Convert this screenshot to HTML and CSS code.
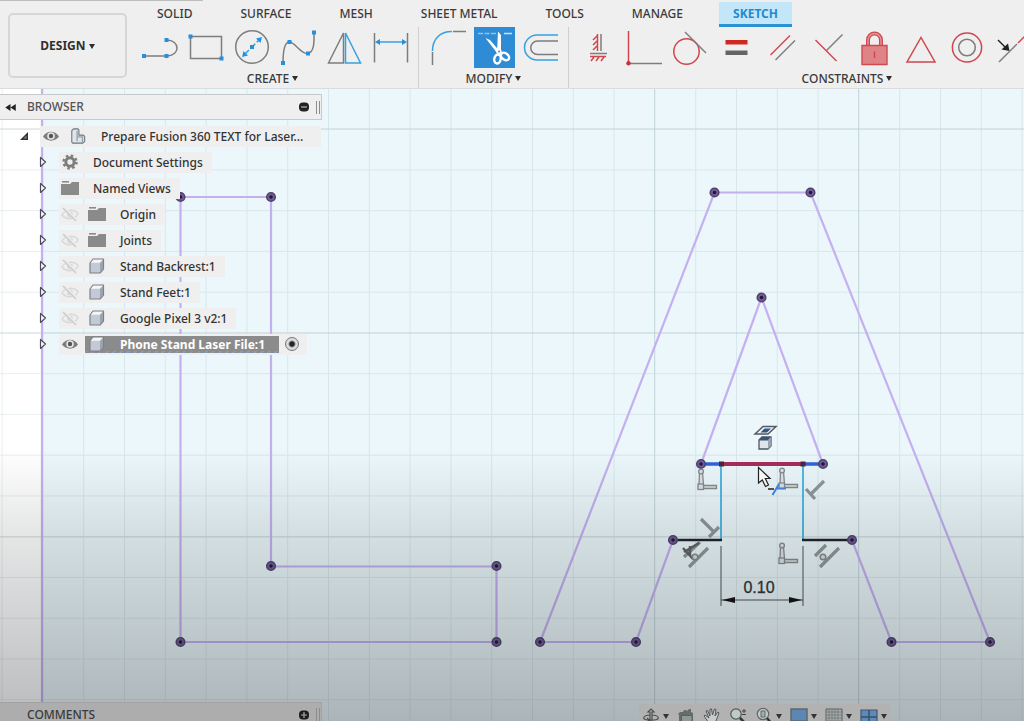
FILE: index.html
```html
<!DOCTYPE html>
<html lang="en">
<head>
<meta charset="utf-8">
<title>Sketch workspace</title>
<link rel="stylesheet" href="styles.css">
</head>
<body>
<svg class="defs" aria-hidden="true">
  <symbol id="eye" viewBox="0 0 18 14"><path d="M1 7.500C4.500 1 13.500 1 17 7.500C13.500 13 4.500 13 1 7.500Z" fill="#7c7c7c"/><circle cx="9" cy="7" r="3.800" fill="#e6e6e6"/><circle cx="9" cy="7" r="2.200" fill="#555"/></symbol>
  <symbol id="eye-off" viewBox="0 0 18 14"><path d="M1 8C4 2 14 2 17 7C14 13 5 13 1 8Z" fill="none" stroke="#d8d8d8" stroke-width="1.500"/><circle cx="9" cy="7.500" r="3" fill="#d8d8d8"/><path d="M3 1L15 13" stroke="#ededed" stroke-width="3"/><path d="M2 1L15 14" stroke="#cccccc" stroke-width="1.500"/></symbol>
  <symbol id="folder" viewBox="0 0 18 14"><path d="M0 3H9L11 1H18V14H0Z" fill="#8a8a8a"/><path d="M1 .8H8" stroke="#8a8a8a" stroke-width="1.600"/></symbol>
  <symbol id="cube" viewBox="0 0 18 16"><path d="M2 5L5 1H15.500V11L12 15H2Z" fill="#c3cad4" stroke="#7c8088" stroke-width="1.200" stroke-linejoin="round"/><path d="M2.800 4.800L5.300 1.800H14.700L12 4.800Z" fill="#f3f5f8"/><path d="M12 5V14.500L15 11V2Z" fill="#9aa3b0"/></symbol>
  <symbol id="open" viewBox="0 0 8 12"><path d="M1.500 1.500V10.500L6.500 6Z" fill="#f4f8fb" stroke="#4f4b59" stroke-width="1.200" stroke-linejoin="round"/></symbol>
  <symbol id="hv" viewBox="0 0 22 24"><g stroke="#858a8c" fill="#dde3e5" stroke-width="1.300"><path d="M3.500 4.500H6.500L7.500 17H3Z"/><path d="M7 17.500H20.500V20.500H7Z"/><rect x="2" y="16" width="5.500" height="5.500"/><circle cx="5" cy="3.500" r="2.400"/></g></symbol>
</svg>

<header class="toolbar">
  <button class="workspace" type="button">DESIGN <span class="caret"></span></button>
  <div class="ribbon">
    <nav class="tabs">
      <button class="tab" type="button">SOLID</button>
      <button class="tab" type="button">SURFACE</button>
      <button class="tab" type="button">MESH</button>
      <button class="tab" type="button">SHEET METAL</button>
      <button class="tab" type="button">TOOLS</button>
      <button class="tab" type="button">MANAGE</button>
      <button class="tab tab-active" type="button">SKETCH</button>
    </nav>
    <div class="panels">
      <section class="panel">
        <div class="tools">
          <button class="tool" type="button" aria-label="Line"><svg viewBox="0 0 46 41"><path class="g" d="M7 29H29.500c14 0 14-16 0-16"/><path class="bf" d="M5 27h4v4H5zM27.500 27h4v4h-4zM27.500 11h4v4h-4z"/></svg></button>
          <button class="tool" type="button" aria-label="Rectangle"><svg viewBox="0 0 46 41"><path class="g" d="M7.500 9.500h31v22h-31z"/><path class="bf" d="M5.500 7.500h4v4h-4zM36.500 29.500h4v4h-4z"/></svg></button>
          <button class="tool" type="button" aria-label="Circle"><svg viewBox="0 0 46 41"><circle class="g" cx="23" cy="20" r="16.300"/><path class="b" d="M15 28L31 12" stroke-dasharray="7 2"/><path class="bf" d="M21 18h4v4h-4zM33 10l-1.500 6-4.500-4.500zM13 30l1.500-6 4.500 4.500z"/></svg></button>
          <button class="tool" type="button" aria-label="Spline"><svg viewBox="0 0 46 41"><path class="g" d="M8 36C8 26 9 15 14.500 15S26 28 33 26.500S39 12 39 5"/><path class="bf" d="M6 34h4v4H6zM12.500 13h4v4h-4zM31 24.500h4v4h-4zM37 3.500h4v4h-4z"/></svg></button>
          <button class="tool" type="button" aria-label="Mirror"><svg viewBox="0 0 46 41"><path class="g" d="M7.500 36L22.500 6V36Z"/><path class="b" d="M24.500 6V36H39.500Z"/></svg></button>
          <button class="tool" type="button" aria-label="Dimension"><svg viewBox="0 0 46 41"><path class="g" d="M7.500 6V35.500M40.500 6V35.500"/><path class="b" d="M10 15H38"/><path class="bf" d="M8 15l5-3v6zM40 15l-5-3v6z"/></svg></button>
        </div>
        <button class="panel-name" type="button">CREATE<span class="caret"></span></button>
      </section>
      <section class="panel">
        <div class="tools">
          <button class="tool" type="button" aria-label="Fillet"><svg viewBox="0 0 46 41"><path class="g" d="M7.500 25V38M28 4.500H41"/><path class="b" d="M7.500 24C7.500 12 15 4.500 27 4.500"/></svg></button>
          <button class="tool" type="button" aria-label="Trim"><svg viewBox="0 0 46 41"><path fill="#2f8bd4" d="M3 0h41v41H3z"/><path d="M7 6.500H26" stroke="#8cc4ef" stroke-width="1.500" stroke-dasharray="5 1.500"/><path d="M33 6.500H41" stroke="#c8e3f8" stroke-width="1.500"/><path fill="#fff" d="M27 4.500L30 8V25H26ZM14.500 11L19 13L28.500 24L26 26Z"/><g fill="none" stroke="#fff" stroke-width="2.400"><ellipse cx="26.500" cy="32" rx="3.200" ry="4.500" transform="rotate(12 26.500 32)"/><ellipse cx="34" cy="29.500" rx="3.200" ry="4.500" transform="rotate(-52 34 29.500)"/></g><circle cx="28" cy="24.500" r="2.600" fill="#fff"/><circle cx="28" cy="24.500" r="1" fill="#2f8bd4"/></svg></button>
          <button class="tool" type="button" aria-label="Offset"><svg viewBox="0 0 46 41"><path class="b" d="M41 8H20a12.500 12.500 0 0 0 0 25H41"/><path class="g" d="M41 14H20.500a6.700 6.700 0 0 0 0 13.500H41"/></svg></button>
        </div>
        <button class="panel-name" type="button">MODIFY<span class="caret"></span></button>
      </section>
      <section class="panel panel-wide">
        <div class="tools">
          <button class="tool" type="button" aria-label="Horizontal/Vertical"><svg viewBox="0 0 46 41"><path class="g" d="M26 7V24M15 26.500H32"/><path class="r" d="M22.500 7V24M22 9l-4 4M22 14l-4 4M22 19l-4 4M15 29.500H31M19 30l-3 4M24 30l-3 4M29 30l-3 4"/></svg></button>
          <button class="tool" type="button" aria-label="Coincident"><svg viewBox="0 0 46 41"><path class="g" d="M9 36.500H41"/><path class="r" d="M7.500 4V36"/><circle cx="7.500" cy="36.300" r="2.200" fill="#cc2f36"/></svg></button>
          <button class="tool" type="button" aria-label="Tangent"><svg viewBox="0 0 46 41"><circle class="r" cx="19.500" cy="24.500" r="12.700"/><path class="g" d="M18 5L39 26"/></svg></button>
          <button class="tool" type="button" aria-label="Equal"><svg viewBox="0 0 46 41"><path fill="#d0281f" d="M12.500 13h22v4.500h-22z"/><path fill="#646464" d="M12.500 23.500h22V28h-22z"/></svg></button>
          <button class="tool" type="button" aria-label="Parallel"><svg viewBox="0 0 46 41"><path class="r" d="M11.500 28L31 8.500"/><path class="g" d="M16.500 33L36 13.500"/></svg></button>
          <button class="tool" type="button" aria-label="Perpendicular"><svg viewBox="0 0 46 41"><path class="g" d="M21.500 23.500L37.500 7.500"/><path class="r" d="M10.500 13L31.500 34"/></svg></button>
          <button class="tool" type="button" aria-label="Fix"><svg viewBox="0 0 46 41"><path d="M17 18V13a6.500 6.500 0 0 1 13 0V18" fill="none" stroke="#cf4a50" stroke-width="4"/><path d="M17 18V13a6.500 6.500 0 0 1 13 0V18" fill="none" stroke="#e49496" stroke-width="1.500"/><path d="M11 18.500h25v19H11z" fill="#df8486" stroke="#cf4a50" stroke-width="1.400"/><path class="r" d="M23.500 24.500V31"/></svg></button>
          <button class="tool" type="button" aria-label="Midpoint"><svg viewBox="0 0 46 41"><path class="r" d="M10 35H38L24 10.500Z"/></svg></button>
          <button class="tool" type="button" aria-label="Concentric"><svg viewBox="0 0 46 41"><circle class="r" cx="24" cy="20.500" r="14.600"/><circle class="g" cx="24" cy="20.500" r="8.300"/></svg></button>
          <button class="tool" type="button" aria-label="Collinear"><svg viewBox="0 0 46 41"><path class="g" d="M10 35L28 17"/><path class="r" d="M29 16L37 8"/><path d="M9 13L17 21" stroke="#222" stroke-width="1.500"/><path d="M20.500 24l-8-1.500 6.500-6z" fill="#222"/></svg></button>
        </div>
        <button class="panel-name" type="button">CONSTRAINTS<span class="caret"></span></button>
      </section>
    </div>
  </div>
</header>

<main class="stage">
  <svg class="drawing" role="img" aria-label="Sketch of the letters L and A">
    <defs>
      <pattern id="grid" patternUnits="userSpaceOnUse" x="1.600" y="39.600" width="40.800" height="40.760"><path d="M.5 0V40.800M0 .5H40.800" stroke="#78989c" stroke-opacity=".17" fill="none"/></pattern>
      <linearGradient id="shade" x1="0" y1="0" x2="0" y2="1"><stop offset=".57" stop-color="#10151a" stop-opacity="0"/><stop offset=".7" stop-color="#10151a" stop-opacity=".105"/><stop offset="1" stop-color="#10151a" stop-opacity=".29"/></linearGradient>
    </defs>
    <rect width="100%" height="100%" fill="#fff"/>
    <rect x="42" width="100%" height="100%" fill="#ebf7fa"/>
    <rect width="100%" height="100%" fill="url(#grid)"/>
    <path d="M654.500 0V2000M858.500 0V2000M0 40H4000M0 244H4000M0 448H4000" stroke="#78989c" stroke-opacity=".22"/>
    <g transform="translate(0 -89)">
      <g fill="none" stroke="#c4b0f1" stroke-width="2.200">
        <path d="M42 89V1200"/>
        <path d="M180.500 197H271V566.500H496.500V642H180.500Z"/>
        <path d="M673 540L636 642H540L714.500 192.500H810.500L990 642H891.500L852 540"/>
        <path d="M701 464L761.500 297.500L823 464"/>
      </g>
      <g fill="none">
        <path d="M701 464H721M803 464H823" stroke="#2e63da" stroke-width="3.500"/>
        <path d="M721 464V540M803 464V540" stroke="#52b9e2" stroke-width="2"/>
        <path d="M721 464H803" stroke="#a62c5a" stroke-width="4"/>
        <path d="M673 540H722M802 540H852" stroke="#20242a" stroke-width="2.500"/>
        <path d="M721 546V606M803 546V606M721 600H803" stroke="#4b5255"/>
      </g>
      <path d="M722 600l13-3v6zM802 600l-13-3v6z" fill="#111"/>
      <path d="M719 461.500h5v5h-5zM800.500 461.500h5v5h-5z" fill="#4c2440"/>
      <g fill="#6f5b96" stroke="#50446c" stroke-width="1.500">
        <circle cx="180.500" cy="197" r="4.300"/><circle cx="271" cy="197" r="4.300"/><circle cx="271" cy="566" r="4.300"/><circle cx="496.500" cy="566" r="4.300"/><circle cx="496.500" cy="642" r="4.300"/><circle cx="180.500" cy="642" r="4.300"/>
        <circle cx="714.500" cy="192.500" r="4.300"/><circle cx="810.500" cy="192.500" r="4.300"/><circle cx="761.500" cy="297.500" r="4.300"/><circle cx="701" cy="464" r="4.300"/><circle cx="823" cy="464" r="4.300"/><circle cx="673" cy="540" r="4.300"/><circle cx="852" cy="540" r="4.300"/><circle cx="540" cy="642" r="4.300"/><circle cx="636" cy="642" r="4.300"/><circle cx="891.500" cy="642" r="4.300"/><circle cx="990" cy="642" r="4.300"/>
      </g>
      <path stroke="#241536" stroke-width="3.500" stroke-linecap="round" d="M180.500 197h0M271 197h0M271 566h0M496.500 566h0M496.500 642h0M180.500 642h0M714.500 192.500h0M810.500 192.500h0M761.500 297.500h0M701 464h0M823 464h0M673 540h0M852 540h0M540 642h0M636 642h0M891.500 642h0M990 642h0"/>
      <use href="#hv" x="696" y="468" width="22" height="24"/>
      <use href="#hv" x="777" y="467" width="22" height="24"/>
      <use href="#hv" x="777" y="542" width="22" height="24"/>
      <g fill="none" stroke="#8f9698" stroke-width="3.200">
        <path d="M824 481L811 494M806 489L815 499"/>
        <path d="M701 519L714 532M719 527L709 537"/>
        <path d="M815 556L826 545M820 567L839 548M684 557L700 542M689 567L708 548"/>
      </g>
      <path d="M683 548L693 559M684 552L699 543M690 546V556" fill="none" stroke="#5d6364" stroke-width="2.500"/>
      <g fill="#d6dcde" stroke="#858a8c" stroke-width="1.500"><circle cx="823" cy="557" r="2.800"/><circle cx="695" cy="557" r="2.800"/></g>
      <path d="M755 434L763 426.500H776L768 434Z" fill="#eef2f4" stroke="#55595f" stroke-width="1.500"/><path d="M760.500 432.500L764.500 428.500H771L767 432.500Z" fill="#33558a"/>
      <path d="M759 440L762 437H771V446L768 449H759Z" fill="#dfe4e9" stroke="#50565e" stroke-width="1.300"/><path d="M759 440.500L762 437H771L768 440.500Z" fill="#31567f"/><path d="M768 440L771 437V446L768 449Z" fill="#99a2ae"/>
      <path d="M758.500 467.500V483L762.300 480L765.500 486.500L768.500 485L765.300 478.500H770Z" fill="#fff" stroke="#222" stroke-width="1.200"/>
      <path d="M768 489H774" stroke="#222" stroke-width="1.500"/><path d="M772.500 495L779 484M777 488.500H786" stroke="#4387e6" stroke-width="2"/>
      <text class="dim" x="759" y="593" text-anchor="middle">0.10</text>
    </g>
    <rect width="100%" height="100%" fill="url(#shade)"/>
  </svg>

  <aside class="browser">
    <div class="bar">
      <svg class="rewind" viewBox="0 0 12 8"><path d="M6 0V8L0 4ZM12 0V8L6 4Z" fill="#222"/></svg>
      <span class="bar-title">BROWSER</span>
      <button class="round" type="button" aria-label="Collapse all"><svg viewBox="0 0 10 10"><rect y=".5" width="10" height="9" rx="4" fill="#222"/><path d="M2 5H8" stroke="#bbb" stroke-width="1.200"/></svg></button>
      <span class="grip"></span>
    </div>
    <ul class="tree">
      <li class="row root"><svg class="toggle" viewBox="0 0 8 8"><path d="M0 8H8V0Z" fill="#333"/><path d="M3.500 6.500h3v-3z" fill="#888"/></svg>
        <span class="pill"><svg class="icon"><use href="#eye"/></svg><svg class="icon" viewBox="0 0 18 18"><path d="M2 3L4 1H9L10 2V8H15L16.500 9.500V15L14.500 17H3L2 16Z" fill="#dfe4ea" stroke="#6e747c" stroke-width="1.200" stroke-linejoin="round"/><path d="M8 3V15M8 10H14V16" fill="none" stroke="#98a1ac" stroke-width="1.500"/></svg><span class="label">Prepare Fusion 360 TEXT for Laser...</span></span></li>
      <li class="row"><svg class="toggle"><use href="#open"/></svg><span class="pill"><svg class="icon" viewBox="0 0 18 18"><circle cx="9" cy="9" r="4.700" fill="none" stroke="#7d7d7d" stroke-width="3.400"/><circle cx="9" cy="9" r="7.300" fill="none" stroke="#7d7d7d" stroke-width="2.600" stroke-dasharray="2.800 2.934"/></svg><span class="label">Document Settings</span></span></li>
      <li class="row"><svg class="toggle"><use href="#open"/></svg><span class="pill"><svg class="icon"><use href="#folder"/></svg><span class="label">Named Views</span></span></li>
      <li class="row"><svg class="toggle"><use href="#open"/></svg><span class="pill"><svg class="icon"><use href="#eye-off"/></svg><svg class="icon"><use href="#folder"/></svg><span class="label">Origin</span></span></li>
      <li class="row"><svg class="toggle"><use href="#open"/></svg><span class="pill"><svg class="icon"><use href="#eye-off"/></svg><svg class="icon"><use href="#folder"/></svg><span class="label">Joints</span></span></li>
      <li class="row"><svg class="toggle"><use href="#open"/></svg><span class="pill"><svg class="icon"><use href="#eye-off"/></svg><svg class="icon"><use href="#cube"/></svg><span class="label">Stand Backrest:1</span></span></li>
      <li class="row"><svg class="toggle"><use href="#open"/></svg><span class="pill"><svg class="icon"><use href="#eye-off"/></svg><svg class="icon"><use href="#cube"/></svg><span class="label">Stand Feet:1</span></span></li>
      <li class="row"><svg class="toggle"><use href="#open"/></svg><span class="pill"><svg class="icon"><use href="#eye-off"/></svg><svg class="icon"><use href="#cube"/></svg><span class="label">Google Pixel 3 v2:1</span></span></li>
      <li class="row"><svg class="toggle"><use href="#open"/></svg><span class="pill pill-active"><svg class="icon"><use href="#eye"/></svg><span class="selected"><svg class="icon"><use href="#cube"/></svg><label class="label" for="active">Phone Stand Laser File:1</label></span><input class="active-dot" id="active" type="radio" checked></span></li>
    </ul>
  </aside>

  <footer class="bottom">
    <div class="bar bar-dim">
      <span class="bar-title bar-indent">COMMENTS</span>
      <button class="round" type="button" aria-label="Add comment"><svg viewBox="0 0 10 10"><rect y=".5" width="10" height="9" rx="4" fill="#1d1d1d"/><path d="M2 5H8M5 2V8" stroke="#aaa" stroke-width="1.200"/></svg></button>
      <span class="grip"></span>
    </div>
    <div class="navbar">
      <button class="nav" type="button" aria-label="Orbit"><svg viewBox="0 0 18 18"><path d="M8 14V5H6L9 2L12 5H10V14M8 8C0 8.500 0 13 6 13H12C18 13 18 8.500 10 8M5 11L7.500 13L5 15.500" fill="none" stroke="#4b4e50" stroke-width="1.200"/></svg><span class="caret"></span></button>
      <button class="nav" type="button" aria-label="Look at"><svg viewBox="0 0 18 18"><path d="M1 7L3 5H6L7 3H9L10 4L12 2H14V5L16 6V17H2V8Z" fill="#666b6c"/><path d="M4.500 8.500H15V17H4.500Z" fill="#8d9899" stroke="#5c6061"/></svg></button>
      <button class="nav" type="button" aria-label="Pan"><svg viewBox="0 0 18 18"><path d="M6 16L1 9L2 8L6 11L3 4L4.500 3.500L7 9V2H8.500L9.500 8L11.500 2L13 2.500L12 9L15 5L16 6L13 14V16Z" fill="#c8cccc" stroke="#55595a"/></svg></button>
      <button class="nav" type="button" aria-label="Zoom"><svg viewBox="0 0 18 18"><circle cx="7" cy="7" r="5.200" fill="#bccaca" stroke="#555" stroke-width="1.200"/><path d="M11 11L16 16" stroke="#333" stroke-width="2.500"/><path d="M13 4H17M15 2V6M13 7.500H17" stroke="#444"/></svg></button>
      <button class="nav" type="button" aria-label="Fit"><svg viewBox="0 0 18 18"><circle cx="8" cy="7" r="5.700" fill="#bccaca" stroke="#666" stroke-width="1.200"/><path d="M6 4h4v6H6z" fill="#9faeaf" stroke="#666"/><path d="M12 11L16 16" stroke="#333" stroke-width="2.500"/></svg><span class="caret"></span></button>
      <button class="nav" type="button" aria-label="Display settings"><svg viewBox="0 0 18 18"><path d="M1 2H17V14H1Z" fill="#5b87b3" stroke="#63686c" stroke-width="1.500"/><path d="M6 16h6" stroke="#555"/></svg><span class="caret"></span></button>
      <button class="nav" type="button" aria-label="Grid and snaps"><svg viewBox="0 0 18 18"><path d="M1 2H17V17H1Z" fill="#a7acae" stroke="#5c6163"/><path d="M4 2V17M7 2V17M10 2V17M13 2V17M1 5H17M1 8H17M1 11H17M1 14H17" stroke="#6e7375" stroke-width=".8"/></svg><span class="caret"></span></button>
      <button class="nav" type="button" aria-label="Viewports"><svg viewBox="0 0 18 18"><path d="M1 3H17V18H1Z" fill="#6089b6" stroke="#3e5877" stroke-width="1.200"/><path d="M9 3V18M1 10H17" stroke="#35516f" stroke-width="1.500"/></svg><span class="caret"></span></button>
    </div>
  </footer>
</main>
</body>
</html>
```
FILE: styles.css
```css
* { box-sizing: border-box; }
body {
  margin: 0;
  height: 100vh;
  display: flex;
  flex-direction: column;
  overflow: hidden;
  font-family: "Noto Sans", "Open Sans", sans-serif;
  font-size: 12px;
  font-weight: 500;
  color: #3a3a3a;
}
button {
  margin: 0;
  padding: 0;
  border: 0;
  background: none;
  color: inherit;
  font: inherit;
}
svg { display: block; }
.defs { position: absolute; width: 0; height: 0; }

.caret {
  display: inline-block;
  border: 3px solid transparent;
  border-top: 5px solid #2e2e2e;
  border-bottom: 0;
  vertical-align: middle;
}

/* Toolbar */
.toolbar {
  display: flex;
  flex: none;
  overflow: hidden;
  background: linear-gradient(#bdbdbd, #bdbdbd) 0 0 / 203px 1px no-repeat #efefef;
  border-bottom: 1px solid #d9dcdd;
}
.workspace {
  flex: none;
  width: 119px;
  margin: 13px 0 10px 8px;
  border: 2px solid #d6d6d6;
  border-radius: 5px;
  font-weight: 700;
  font-size: 12px;
  color: #2f2f2f;
}
.ribbon { flex: 1; min-width: 0; }
.tabs {
  display: flex;
  gap: 24px;
  padding: 2px 0 0 18px;
}
.tab {
  height: 25px;
  padding: 0 12px;
  border-bottom: 3px solid transparent;
  white-space: nowrap;
}
.tab-active {
  min-width: 73px;
  background: #c3e7f9;
  border-bottom-color: #2a91d2;
  color: #1f8ad0;
  font-weight: 700;
}
.panels { display: flex; }
.panel {
  flex: none;
  display: flex;
  flex-direction: column;
  align-items: center;
}
.panel:not(.panel-wide) { border-right: 1px solid #cfcfcf; }
.tools { display: flex; padding: 0 5px 0 6px; }
.panel:first-child .tools { padding-left: 10px; }
.panel-wide { width: 556px; align-items: center; }
.panel-wide .tools { align-self: flex-start; }
.tool, .tool svg { width: 46px; height: 41px; }
.panel-name { height: 20px; }
.panel-name .caret { margin-left: 3px; margin-top: -2px; }
.g { fill: none; stroke: #7d7d7d; stroke-width: 1.5; }
.b { fill: none; stroke: #36a0e0; stroke-width: 1.5; }
.r { fill: none; stroke: #d0474d; stroke-width: 1.5; }
.bf { fill: #2590e0; }

/* Drawing area */
.stage {
  position: relative;
  flex: 1;
  min-height: 0;
  display: flex;
  flex-direction: column;
  justify-content: space-between;
}
.drawing {
  position: absolute;
  inset: 0;
  width: 100%;
  height: 100%;
}
.dim {
  font-family: "Liberation Sans", Arial, sans-serif;
  font-size: 16px;
  font-weight: 400;
  fill: #333;
  stroke: #333;
  stroke-width: .3px;
}

/* Browser */
.browser { position: relative; padding-top: 5px; }
.bar {
  display: flex;
  align-items: center;
  width: 322px;
  height: 26px;
  padding: 0 1px 0 5px;
  background: #efefef;
  border: 1px solid #c9c9c9;
  border-left: 0;
}
.rewind { width: 11px; height: 7px; }
.bar-title { flex: 1; margin-left: 11px; line-height: 12px; color: #555; }
.bar-indent { margin-left: 22px; color: #3b3b3b; }
.round, .round svg { width: 10px; height: 10px; }
.grip {
  width: 4px;
  height: 13px;
  margin-left: 7px;
  border: solid #8c8c8c;
  border-width: 0 1px;
}
.tree { margin: 0; padding: 3px 0 0; list-style: none; color: #333; }
.row {
  display: flex;
  align-items: center;
  height: 26px;
  padding-left: 39px;
  gap: 12px;
}
.toggle { width: 8px; height: 12px; }
.root { padding-left: 20px; }
.root .toggle { height: 8px; }
.root .pill { min-width: 281px; }
.pill {
  display: flex;
  align-items: center;
  gap: 9px;
  height: 21px;
  padding: 0 9px 0 2px;
  background: #efefef;
  white-space: nowrap;
}
.icon { flex: none; width: 18px; height: 16px; }
.label { margin-left: 5px; }
.pill-active { gap: 6px; padding-right: 8px; }
.selected {
  display: flex;
  align-items: center;
  gap: 9px;
  height: 17px;
  padding: 0 14px 0 3px;
  background: repeating-linear-gradient(135deg, #7f9cc4 0 2px, #8b8b8b 2px 5px) 0 100% / 100% 2px no-repeat #8b8b8b;
  color: #fff;
  font-weight: 700;
}
.active-dot {
  appearance: none;
  width: 14px;
  height: 14px;
  margin: 0;
  border: 1px solid #777;
  border-radius: 50%;
  background: radial-gradient(circle, #222 0 2px, #dfe3e6 4px, #c3c7ca);
}

/* Bottom strip */
.bottom {
  position: relative;
  display: flex;
  justify-content: space-between;
  height: 19px;
}
.bar-dim {
  height: 19px;
  padding-top: 5px;
  background: #adadad;
  border-color: #a2a2a2;
  border-bottom: 0;
}
.navbar {
  display: flex;
  align-items: center;
  gap: 8px;
  height: 24px;
  margin: 2px 134px 0 0;
  padding: 0 3px;
  background: #b1b2b1;
}
.nav { display: flex; align-items: center; gap: 3px; }
.nav svg { width: 18px; height: 18px; }
.nav .caret { border-top-color: #333; }
```
